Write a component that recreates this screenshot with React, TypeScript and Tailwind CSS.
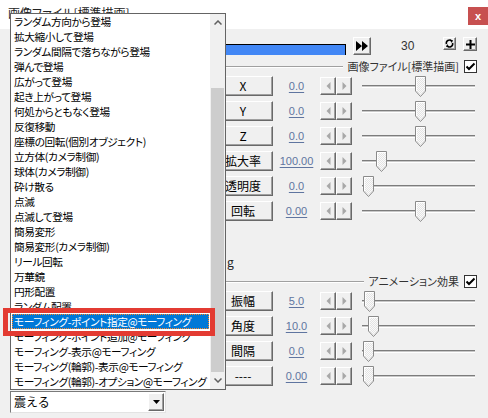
import React from "react";

const items = [
  "ランダム方向から登場",
  "拡大縮小して登場",
  "ランダム間隔で落ちながら登場",
  "弾んで登場",
  "広がって登場",
  "起き上がって登場",
  "何処からともなく登場",
  "反復移動",
  "座標の回転(個別オブジェクト)",
  "立方体(カメラ制御)",
  "球体(カメラ制御)",
  "砕け散る",
  "点滅",
  "点滅して登場",
  "簡易変形",
  "簡易変形(カメラ制御)",
  "リール回転",
  "万華鏡",
  "円形配置",
  "ランダム配置",
  "モーフィング-ポイント指定@モーフィング",
  "モーフィング-ポイント追加@モーフィング",
  "モーフィング-表示@モーフィング",
  "モーフィング(輪郭)-表示@モーフィング",
  "モーフィング(輪郭)-オプション@モーフィング",
];
const selected = 20;

// 画像ファイル / アニメーション効果 のトラックバー
const imageParams = [
  { label: "X", value: "0.0", pos: 53 },
  { label: "Y", value: "0.0", pos: 53 },
  { label: "Z", value: "0.0", pos: 53 },
  { label: "拡大率", value: "100.00", pos: 14 },
  { label: "透明度", value: "0.0", pos: 1 },
  { label: "回転", value: "0.00", pos: 53 },
];
const animParams = [
  { label: "振幅", value: "5.0", pos: 2 },
  { label: "角度", value: "10.0", pos: 6 },
  { label: "間隔", value: "0.0", pos: 1 },
  { label: "----", value: "0.00", pos: 1 },
];

function Bevel({ className = "", children }: { className?: string; children?: React.ReactNode }) {
  return (
    <div
      className={`flex items-center justify-center border border-t-white border-l-white border-r-[#696969] border-b-[#696969] bg-[#f0f0f0] shadow-[inset_-1px_-1px_0_#a0a0a0] ${className}`}
    >
      {children}
    </div>
  );
}

function Thumb({ left }: { left: number }) {
  return (
    <svg className="absolute top-0" style={{ left }} width="11" height="21" viewBox="0 0 11 21">
      <path d="M0.5 0.5H10.5V15L5.5 20.5L0.5 15Z" fill="url(#chk)" stroke="#8a8a8a" />
      <path d="M1.5 15V1.5H9.5" fill="none" stroke="#fff" />
    </svg>
  );
}

function CheckBox() {
  return (
    <div className="ml-[5px] flex h-[13px] w-[13px] shrink-0 items-center justify-center border border-[#333] bg-white">
      <svg width="11" height="11" viewBox="0 0 11 11">
        <path d="M1.5 5.5L4 8L9.5 2.5" fill="none" stroke="#000" strokeWidth="2" />
      </svg>
    </div>
  );
}

function Section({ title }: { title: string }) {
  return (
    <div className="flex h-[13px] items-center">
      <div className="h-[2px] flex-1 border-t border-b border-t-[#a0a0a0] border-b-white" />
      <span className="ml-[4px] text-[11px] leading-none text-[#333] [font-feature-settings:'palt']">{title}</span>
      <CheckBox />
    </div>
  );
}

function ParamRow({ label, value, pos }: { label: string; value: string; pos: number }) {
  return (
    <div className="flex h-[20px] items-center">
      <Bevel className="h-[20px] w-[60px] text-[12px] leading-none">{label}</Bevel>
      <div className="w-[47px] text-center font-['Liberation_Sans',sans-serif] text-[11px] text-[#5f75a0] underline underline-offset-2">
        {value}
      </div>
      <div className="flex h-[18px] w-[32px]">
        <Bevel className="h-full w-[16px]">
          <svg width="5" height="8" viewBox="0 0 5 8">
            <path d="M4.5 0L0.5 4L4.5 8Z" fill="#a8a8a8" />
          </svg>
        </Bevel>
        <Bevel className="h-full w-[16px]">
          <svg width="5" height="8" viewBox="0 0 5 8">
            <path d="M0.5 0L4.5 4L0.5 8Z" fill="#a8a8a8" />
          </svg>
        </Bevel>
      </div>
      <div className="relative ml-[10px] h-[21px] w-[113px]">
        <div className="absolute left-0 right-0 top-[9px] h-[3px] border-t border-b border-t-[#7c7c7c] border-b-white bg-[#c8c8c8]" />
        <Thumb left={pos} />
      </div>
    </div>
  );
}

export default function App() {
  return (
    <div className="relative h-[418px] w-[488px] overflow-hidden bg-[#f0f0f0] font-['Noto_Sans_CJK_JP',sans-serif] text-black">
      <svg className="absolute h-0 w-0">
        <defs>
          <pattern id="chk" width="2" height="2" patternUnits="userSpaceOnUse">
            <rect width="2" height="2" fill="#e4e4e4" />
            <rect width="1" height="1" fill="#fafafa" />
            <rect x="1" y="1" width="1" height="1" fill="#fafafa" />
          </pattern>
        </defs>
      </svg>

      {/* タイトルバー */}
      <div className="flex h-[29px] bg-white">
        <div className="pl-[8px] pt-[5px] text-[12px] leading-[16px] text-[#222] [font-feature-settings:'palt']">
          画像ファイル[標準描画]
        </div>
        <div className="ml-auto mt-[7px] flex h-[18px] w-[20px] items-center justify-center bg-[#c75050] font-['Liberation_Sans',sans-serif] text-[11px] font-bold leading-none text-white">
          x
        </div>
      </div>

      {/* 設定ダイアログ本体 */}
      <div className="flex flex-col pl-[213px] pr-[11px]">
        <div className="mt-[8px] flex h-[18px] items-center">
          <div className="h-[11px] w-[133px] self-end border-t border-r border-black bg-[#4287f5]" />
          <Bevel className="ml-[7px] h-[18px] w-[18px]">
            <svg width="12" height="10" viewBox="0 0 12 10">
              <path d="M0 0L6 5L0 10Z M6 0L12 5L6 10Z" fill="#000" />
            </svg>
          </Bevel>
          <span className="ml-[30px] font-['Liberation_Sans',sans-serif] text-[12px] text-[#333]">30</span>
          <Bevel className="ml-auto h-[13px] w-[13px] self-start">
            <svg width="9" height="9" viewBox="0 0 9 9">
              <path d="M1.5 5A3 3 0 0 1 6.5 2" fill="none" stroke="#000" strokeWidth="1.6" />
              <path d="M7.5 4A3 3 0 0 1 2.5 7" fill="none" stroke="#000" strokeWidth="1.6" />
              <path d="M5 0.5L8 1.2L6.8 4Z M4 8.5L1 7.8L2.2 5Z" fill="#000" />
            </svg>
          </Bevel>
          <Bevel className="ml-[7px] h-[14px] w-[14px] self-start">
            <svg width="9" height="9" viewBox="0 0 9 9">
              <path d="M4.5 0V9 M0 4.5H9" stroke="#000" strokeWidth="2" />
            </svg>
          </Bevel>
        </div>

        <div className="mt-[5px]">
          <Section title="画像ファイル[標準描画]" />
        </div>
        <div className="mt-[3px] flex flex-col gap-[5px]">
          {imageParams.map((p) => (
            <ParamRow key={p.label} {...p} />
          ))}
        </div>

        <div className="mt-[33px] h-[16px] pl-[14px] text-[12px] leading-[16px] text-[#222]">g</div>

        <div className="mt-[5px]">
          <Section title="アニメーション効果" />
        </div>
        <div className="mt-[3px] flex flex-col gap-[5px]">
          {animParams.map((p) => (
            <ParamRow key={p.label} {...p} />
          ))}
        </div>
      </div>

      {/* 開いたコンボボックスのリスト */}
      <div className="absolute left-[10px] top-[13px] flex w-[216px] flex-col">
        <div className="flex h-[377px] border border-[#646464] bg-white">
          <div className="flex min-w-0 flex-1 flex-col overflow-hidden tracking-[-0.4px] [font-feature-settings:'palt']">
            {items.map((t, i) =>
              i === selected ? (
                <div
                  key={t}
                  className="mx-[1px] h-[15px] whitespace-nowrap border border-dotted border-[#ff8728] bg-[#0078d7] pl-[1px] text-[10.7px] leading-[13px] text-white"
                >
                  {t}
                </div>
              ) : (
                <div key={t} className="h-[15px] whitespace-nowrap pl-[3px] text-[10.7px] leading-[15px]">
                  {t}
                </div>
              )
            )}
          </div>
          <div className="flex w-[15px] shrink-0 flex-col bg-[#f0f0f0]">
            <div className="flex h-[17px] items-center justify-center">
              <svg width="8" height="5" viewBox="0 0 8 5">
                <path d="M0.5 4.5L4 1L7.5 4.5" fill="none" stroke="#606060" strokeWidth="1.5" />
              </svg>
            </div>
            <div className="flex flex-1 flex-col">
              <div className="mx-[1px] mt-[57px] flex-1 bg-[#cdcdcd]" />
            </div>
            <div className="flex h-[17px] items-center justify-center">
              <svg width="8" height="5" viewBox="0 0 8 5">
                <path d="M0.5 0.5L4 4L7.5 0.5" fill="none" stroke="#606060" strokeWidth="1.5" />
              </svg>
            </div>
          </div>
        </div>
        <div className="mt-[1px] flex h-[22px] w-[156px] items-center border border-t-[#7a7a7a] border-l-[#7a7a7a] border-r-[#e3e3e3] border-b-[#e3e3e3] bg-white">
          <span className="pl-[3px] text-[12px]">震える</span>
          <Bevel className="ml-auto mr-[1px] h-[18px] w-[16px]">
            <svg width="7" height="4" viewBox="0 0 7 4">
              <path d="M0 0H7L3.5 4Z" fill="#000" />
            </svg>
          </Bevel>
        </div>
      </div>

      {/* 注目枠 */}
      <div className="absolute left-[3px] top-[308px] h-[28px] w-[212px] border-[5px] border-[#e33b32]" />
    </div>
  );
}
